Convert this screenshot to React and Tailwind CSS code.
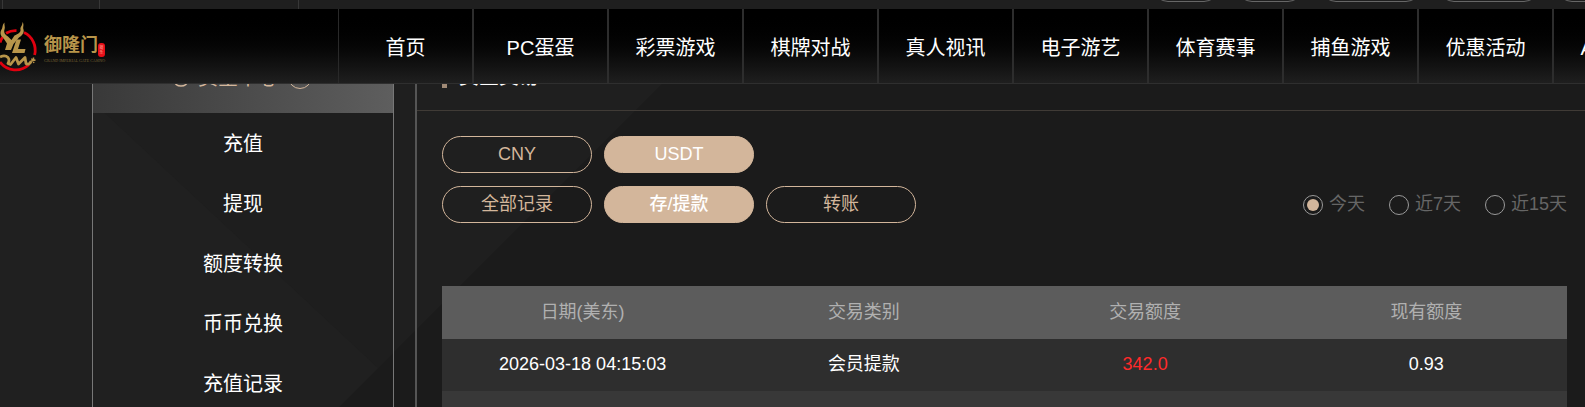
import clsx from "clsx";

const NAV_ITEMS = [
  "首页",
  "PC蛋蛋",
  "彩票游戏",
  "棋牌对战",
  "真人视讯",
  "电子游艺",
  "体育赛事",
  "捕鱼游戏",
  "优惠活动",
  "APP下载",
];

const SIDE_ITEMS = ["充值", "提现", "额度转换", "币币兑换", "充值记录"];

const CURRENCIES = ["CNY", "USDT"];
const RECORD_TYPES = ["全部记录", "存/提款", "转账"];
const RANGES = ["今天", "近7天", "近15天"];

const COLUMNS = ["日期(美东)", "交易类别", "交易额度", "现有额度"];

function Backdrop() {
  return (
    <svg
      className="absolute inset-0 h-full w-full"
      viewBox="0 0 1585 407"
      preserveAspectRatio="xMinYMin slice"
      aria-hidden
    >
      <rect width="1585" height="407" fill="#1b1b1b" />
      <polygon points="0,0 746,0 339,407 0,407" fill="#1f1f1f" />
      <polygon points="74,83 93,83 378,368 339,407 0,407 0,84" fill="#202020" />
      <polygon points="93,102 394,102 394,352 378,368" fill="#1e1e1e" />
    </svg>
  );
}

function Emblem() {
  return (
    <svg className="h-[52px] w-[38px]" viewBox="0 20 38 52" fill="none" aria-hidden>
      {/* ring */}
      <g stroke="#e1000f" strokeWidth="2.8">
        <path d="M6 33.2A19.4 19.4 0 0 1 16.5 30.7" />
        <path d="M24 32.6A19.4 19.4 0 0 1 34.6 55" />
        <path d="M0 62A19.4 19.4 0 0 0 29 64.5" />
        <path d="M0 42.5Q1 39 3 37" />
      </g>
      {/* antlers and letters */}
      <g fill="#b8954a">
        <path d="M4.5 22.5C4 25 5.500 27 4.500 29.500C3.500 32.500 5 34.500 8 36.500L11.500 40L14.500 35.500C18 34 21 32.500 20.500 29.500C20 27 22.500 26 22.500 22C24.500 25 22.500 27 23.500 29.500C24.500 33 22 35.500 19 37.500L13.500 44L11 50H5L7 43.500L3 37.500C0 35.500 0 32 1.500 29.500C3 27.500 2 25 4.500 22.500Z" />
        <path d="M16.500 39.500H21L18 49H25.500L24.500 53H12Z" />
      </g>
      {/* dragon body */}
      <path
        d="M0 57Q5 54.500 8 57.500Q10 60 8 63.500L10.500 64.500L16 57.500L18.500 64L25 57.500L26 63.500Q29 65.500 31 61.500"
        stroke="#b8954a"
        strokeWidth="2.8"
        strokeLinejoin="round"
      />
      <path d="M30 61.5L35.500 60M31.500 58.500L34 63M33.500 57.500V62" stroke="#b8954a" strokeWidth="1.5" />
    </svg>
  );
}

function Logo() {
  return (
    <a href="#" className="flex items-center gap-[6px]">
      <Emblem />
      <span className="flex flex-col pt-[3px]">
        <span className="flex items-end">
          <span className="text-[18px] leading-[26px] font-bold text-[#b8954a]">御隆门</span>
          <span className="mb-px flex h-[14px] w-[7px] flex-col items-center justify-center rounded-[3px] bg-[#e60f19] text-[4px] leading-[5px] text-[#ffb0a0]">
            <span>娱</span>
            <span>乐</span>
          </span>
        </span>
        <span className="font-['Liberation_Serif',serif] text-[4px] leading-[6px] whitespace-nowrap text-[#7d6636]">
          GRAND IMPERIAL GATE CASINO
        </span>
      </span>
    </a>
  );
}

function TopStrip() {
  return (
    <div className="relative flex h-[9px] shrink-0 justify-between overflow-hidden bg-[#1f1f1f]">
      <div className="flex">
        <span className="w-[3px] border-r border-[#373737]" />
        <span className="w-[97px] border-r border-[#373737]" />
        <span className="w-[199px] border-r border-[#373737]" />
      </div>
      {/* bottom edges of the account pills */}
      <div className="-mt-[28px] -mr-[60px] flex h-[30px] shrink-0 gap-[18px]">
        <span className="w-[66px] rounded-full border border-[#666]" />
        <span className="w-[66px] rounded-full border border-[#666]" />
        <span className="w-[100px] rounded-full border border-[#666]" />
        <span className="w-[100px] rounded-full border border-[#666]" />
        <span className="w-[88px] rounded-full border border-[#666]" />
      </div>
    </div>
  );
}

function Header() {
  return (
    <header className="relative z-10 flex h-[75px] shrink-0 overflow-hidden border-b border-[#2f2f2f] bg-linear-to-b from-black to-[#1f1f1f]">
      <div className="flex w-[338px] shrink-0 items-center">
        <Logo />
      </div>
      <nav className="flex border-l border-[#292929]">
        {NAV_ITEMS.map((label) => (
          <a
            key={label}
            href="#"
            className="flex w-[135px] shrink-0 items-center justify-center border-r-2 border-[#2d2d2d] pt-[3px] text-[20px] text-white"
          >
            {label}
          </a>
        ))}
      </nav>
    </header>
  );
}

function Sidebar() {
  return (
    <aside className="ml-[92px] w-[302px] shrink-0 border-x border-[#777]">
      <div className="flex h-[72px] items-center justify-center gap-[10px] bg-linear-to-r from-[#393939] to-[#5e5e5e] text-[20px] text-[#d3b69b]">
        <svg className="h-[20px] w-[14px]" viewBox="0 0 14 20" fill="none" stroke="currentColor" strokeWidth="1.5" aria-hidden>
          <path d="M4 1H10L8.500 5C12 8 13 11 13 14C13 18 10 19 7 19S1 18 1 14C1 11 2 8 5.500 5Z" />
        </svg>
        <span className="pt-[2px]">资金中心</span>
        <svg className="h-[24px] w-[24px]" viewBox="0 0 24 24" fill="none" stroke="currentColor" aria-hidden>
          <circle cx="12" cy="12" r="11.5" />
          <path d="M7 10L12 15L17 10" />
        </svg>
      </div>
      <ul>
        {SIDE_ITEMS.map((label) => (
          <li key={label}>
            <a href="#" className="flex h-[60px] items-center justify-center pt-[2px] text-[20px] text-white">
              {label}
            </a>
          </li>
        ))}
      </ul>
    </aside>
  );
}

function PillGroup({ items, active }) {
  return (
    <div className="flex gap-3">
      {items.map((label) => (
        <button
          key={label}
          type="button"
          className={clsx(
            "h-[37px] w-[150px] rounded-full border border-[#d3b69b] text-[18px] leading-[27px]",
            label === active ? "bg-[#d3b69b] font-medium text-white" : "text-[#d3b69b]"
          )}
        >
          {label}
        </button>
      ))}
    </div>
  );
}

function RangePicker() {
  return (
    <div className="flex gap-6">
      {RANGES.map((label, i) => (
        <label key={label} className="flex items-center gap-[6px] text-[18px] leading-[27px] text-[#666]">
          <input
            type="radio"
            name="range"
            defaultChecked={i === 0}
            className="h-5 w-5 appearance-none rounded-full border border-[#999] bg-clip-content p-[3px] checked:bg-[#d3b69b]"
          />
          <span>{label}</span>
        </label>
      ))}
    </div>
  );
}

function RecordsTable() {
  return (
    <table className="mt-[63px] w-full table-fixed text-center text-[18px]">
      <thead>
        <tr className="h-[53px] bg-[#5c5c5c] text-[#b0b0b0]">
          {COLUMNS.map((label) => (
            <th key={label} className="font-normal">
              {label}
            </th>
          ))}
        </tr>
      </thead>
      <tbody>
        <tr className="h-[52px] bg-[#2e2e2e] text-white">
          <td className="pb-[2px]">2026-03-18 04:15:03</td>
          <td className="pb-[2px]">会员提款</td>
          <td className="pb-[2px] text-[#ff2a2a]">342.0</td>
          <td className="pb-[2px]">0.93</td>
        </tr>
        <tr className="h-[52px] bg-[#383838]">
          <td colSpan={4} />
        </tr>
      </tbody>
    </table>
  );
}

function Records() {
  return (
    <section className="ml-[21px] min-w-0 flex-1 border-l-2 border-[#555]">
      <div className="flex h-[70px] items-center gap-3 border-b border-[#403b36] pl-[25px]">
        <span className="h-[24px] w-[5px] bg-[#a08a76]" />
        <h2 className="pt-[2px] text-[20px] font-medium text-white">资金交易</h2>
      </div>
      <div className="pt-[25px] pr-[18px] pl-[25px]">
        <PillGroup items={CURRENCIES} active="USDT" />
        <div className="mt-[13px] flex items-center justify-between">
          <PillGroup items={RECORD_TYPES} active="存/提款" />
          <RangePicker />
        </div>
        <RecordsTable />
      </div>
    </section>
  );
}

export default function App() {
  return (
    <div className="relative flex h-screen flex-col overflow-hidden bg-[#1b1b1b] font-['Liberation_Sans','Noto_Sans_CJK_SC',sans-serif]">
      <Backdrop />
      <TopStrip />
      <Header />
      {/* the page is scrolled, so its headings sit under the header */}
      <main className="relative -mt-[43px] flex flex-1">
        <Sidebar />
        <Records />
      </main>
    </div>
  );
}
